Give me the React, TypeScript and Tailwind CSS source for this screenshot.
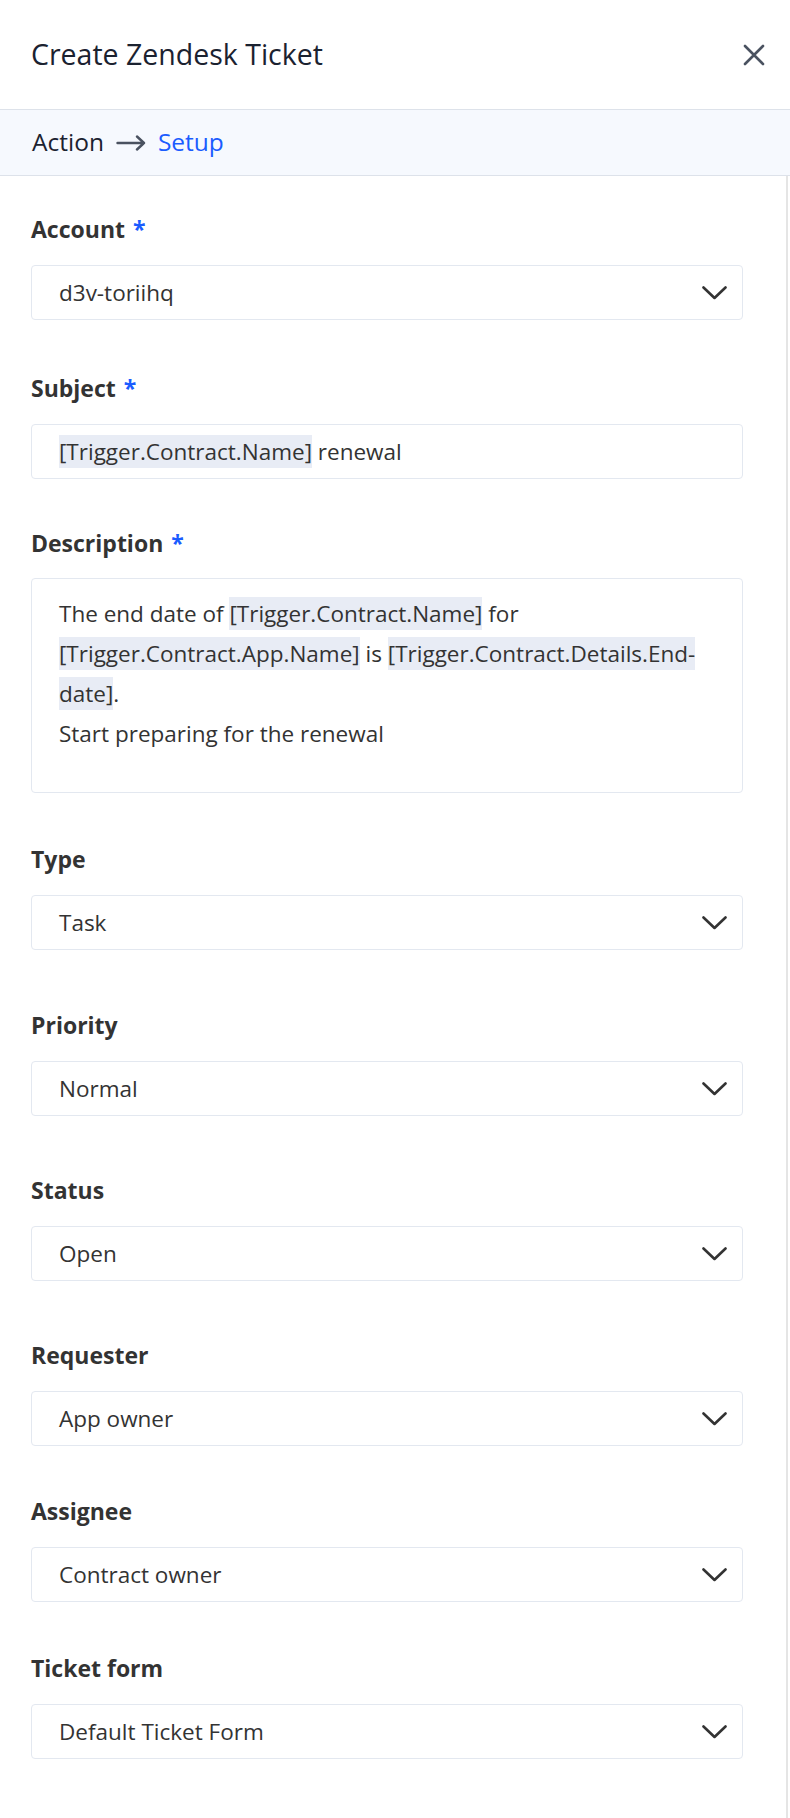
import React from "react";

const font = { fontFamily: "'Open Sans', 'Noto Sans', sans-serif" };

type Field = {
  label: string;
  value: string;
  required?: boolean;
  gap: string;
};

const selects: Field[] = [
  { label: "Type", value: "Task", gap: "mt-[54px]" },
  { label: "Priority", value: "Normal", gap: "mt-[63px]" },
  { label: "Status", value: "Open", gap: "mt-[62px]" },
  { label: "Requester", value: "App owner", gap: "mt-[62px]" },
  { label: "Assignee", value: "Contract owner", gap: "mt-[53px]" },
  { label: "Ticket form", value: "Default Ticket Form", gap: "mt-[54px]" },
];

function Chevron() {
  return (
    <svg width="25" height="14" viewBox="0 0 25 14" fill="none" className="shrink-0">
      <polyline
        points="1.5,1.5 12.5,12 23.5,1.5"
        stroke="#333333"
        strokeWidth="2.6"
        strokeLinecap="round"
        strokeLinejoin="round"
      />
    </svg>
  );
}

function Label({ text, required }: { text: string; required?: boolean }) {
  return (
    <div className="h-[30px] leading-[24px] text-[23px] font-bold text-[#333333]">
      {text}
      {required && <span className="ml-[8px] text-[#1a5cff]">*</span>}
    </div>
  );
}

function Token({ children }: { children: React.ReactNode }) {
  return <span className="bg-[#e8ecf5] py-[1px]">{children}</span>;
}

function SelectBox({ value }: { value: string }) {
  return (
    <div className="mt-[18px] h-[55px] flex items-center justify-between rounded-[4px] border border-[#e3e8f0] bg-white pl-[27px] pr-[15px]">
      <span className="text-[22.5px] text-[#333333]">{value}</span>
      <Chevron />
    </div>
  );
}

export default function App() {
  return (
    <div className="w-[790px] min-h-[1818px] bg-white" style={font}>
      <div className="h-[110px] flex items-center justify-between border-b border-[#dde2ea] pl-[31px] pr-[25px]">
        <h1 className="text-[28.5px] font-medium text-[#1b2230] leading-none">
          Create Zendesk Ticket
        </h1>
        <svg width="22" height="22" viewBox="0 0 22 22" fill="none">
          <path d="M2 2 L20 20 M20 2 L2 20" stroke="#4a5260" strokeWidth="2.6" strokeLinecap="round" />
        </svg>
      </div>

      <div className="h-[66px] flex items-center gap-[12px] border-b border-[#dde2ea] bg-[#f6f9fe] pl-[32px] text-[24.5px]">
        <span className="text-[#1b2230]">Action</span>
        <svg width="30" height="16" viewBox="0 0 30 16" fill="none">
          <path d="M1.5 8 H28 M21 1.5 L28 8 L21 14.5" stroke="#4a5260" strokeWidth="2.4" strokeLinecap="round" strokeLinejoin="round" />
        </svg>
        <span className="text-[#1a5cff]">Setup</span>
      </div>

      <div className="mr-[2px] min-h-[1642px] border-r-2 border-[#e5e5e5]">
        <div className="pt-[41px] pl-[31px] pr-[43px] pb-[40px]">
          <Label text="Account" required />
          <SelectBox value="d3v-toriihq" />

          <div className="mt-[56px]">
            <Label text="Subject" required />
            <div className="mt-[18px] h-[55px] flex items-center rounded-[4px] border border-[#e3e8f0] pl-[27px] text-[22.5px] text-[#333333]">
              <span>
                <Token>[Trigger.Contract.Name]</Token> renewal
              </span>
            </div>
          </div>

          <div className="mt-[52px]">
            <Label text="Description" required />
            <div className="mt-[17px] h-[215px] rounded-[4px] border border-[#e3e8f0] pl-[27px] pr-[20px] pt-[15px] text-[22.5px] leading-[40px] text-[#333333]">
              The end date of <Token>[Trigger.Contract.Name]</Token> for
              <br />
              <Token>[Trigger.Contract.App.Name]</Token> is{" "}
              <Token>[Trigger.Contract.Details.End-</Token>
              <br />
              <Token>date]</Token>.
              <br />
              Start preparing for the renewal
            </div>
          </div>

          {selects.map((f) => (
            <div key={f.label} className={f.gap}>
              <Label text={f.label} required={f.required} />
              <SelectBox value={f.value} />
            </div>
          ))}
        </div>
      </div>
    </div>
  );
}
